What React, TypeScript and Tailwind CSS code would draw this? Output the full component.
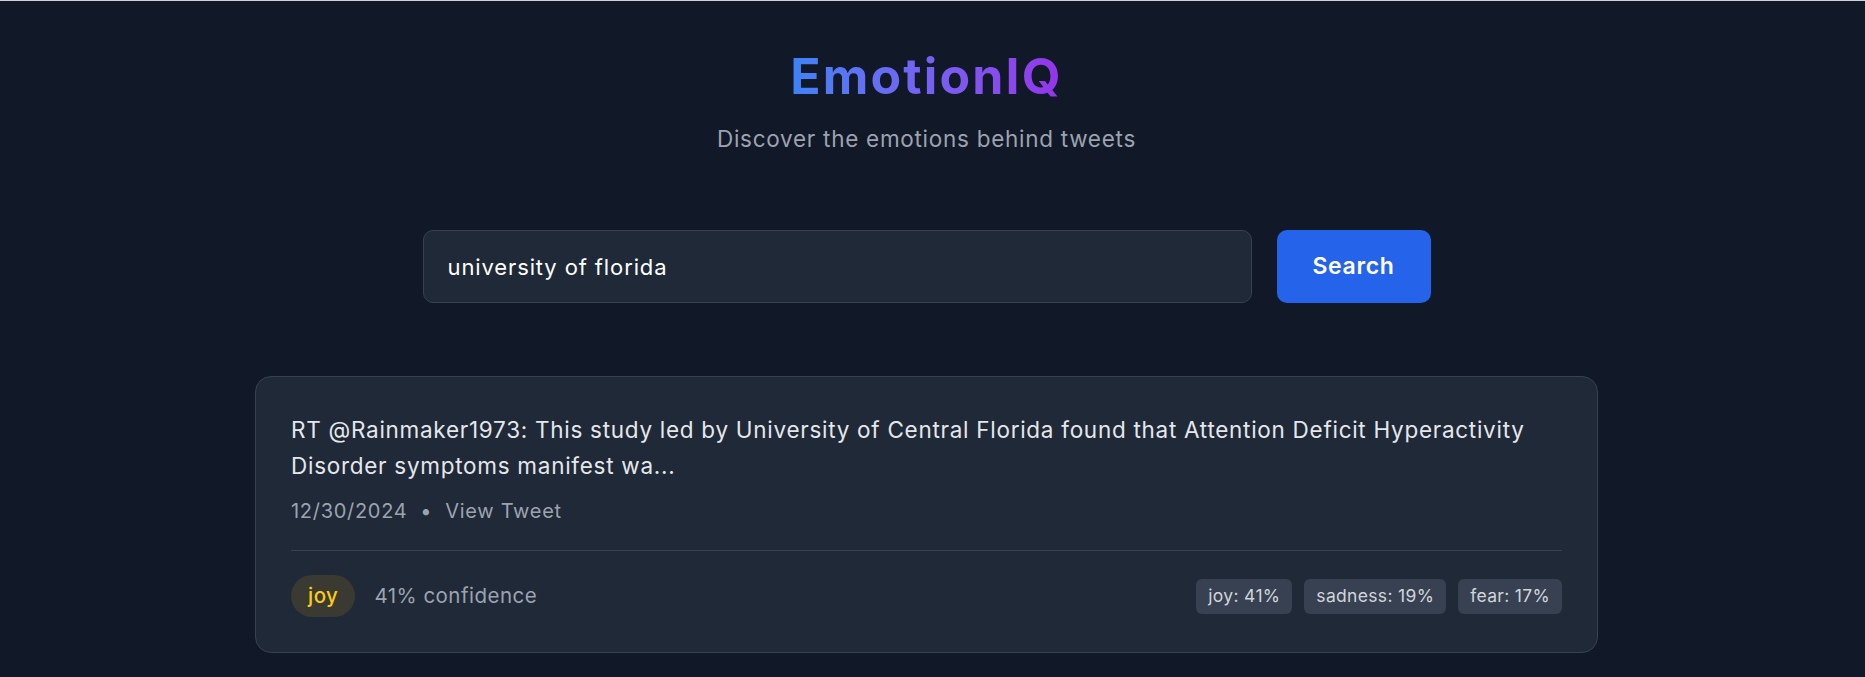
const emotions = [
  { label: "joy", value: 41 },
  { label: "sadness", value: 19 },
  { label: "fear", value: 17 },
];

export default function App() {
  return (
    <div className="min-h-screen bg-[#111827] border-t border-[#cfd3d8] pr-3 font-['Inter',sans-serif] tracking-[0.045em]">
      <header className="pt-[50px] text-center">
        <h1 className="inline-block bg-linear-to-r from-[#3b82f6] to-[#9333ea] bg-clip-text text-[50px] font-bold leading-none tracking-[0.043em] text-transparent">
          EmotionIQ
        </h1>
        <p className="mt-[23px] text-[22.5px] leading-[30px] text-[#9ca3af]">
          Discover the emotions behind tweets
        </p>
      </header>

      <div className="mx-auto mt-[76px] flex max-w-[1008px] gap-[25px]">
        <input
          className="h-[73px] flex-1 rounded-[10px] border border-[#374151] bg-[#1f2937] px-6 text-[22px] tracking-[0.04em] text-white outline-none"
          defaultValue="university of florida"
        />
        <button className="h-[73px] w-[154px] rounded-[10px] bg-[#2563eb] text-[23px] font-semibold tracking-[0.03em] text-white">
          Search
        </button>
      </div>

      <div className="mx-auto mt-[73px] max-w-[1343px] rounded-[16px] border border-[#374151] bg-[#1f2937] p-[35px]">
        <p className="text-[22.5px] leading-[36px] text-[#e5e7eb]">
          RT @Rainmaker1973: This study led by University of Central Florida found that Attention Deficit Hyperactivity
          Disorder symptoms manifest wa...
        </p>
        <div className="mt-[13px] flex items-center text-[20px] leading-[28px] tracking-[0.035em] text-[#9ca3af]">
          <span>12/30/2024</span>
          <span className="mx-[13px] text-[#9ca3af]">•</span>
          <a className="cursor-pointer hover:text-[#60a5fa]">View Tweet</a>
        </div>

        <div className="mt-[25px] flex items-center justify-between border-t border-[#374151] pt-[24px]">
          <div className="flex items-center gap-[19px] tracking-[0.03em]">
            <span className="flex h-[42px] items-center rounded-full bg-[#3a3a33] px-[17px] text-[20.5px] font-medium text-[#facc15]">
              joy
            </span>
            <span className="text-[20.5px] text-[#9ca3af]">41% confidence</span>
          </div>
          <div className="flex gap-[12px] tracking-[0.02em]">
            {emotions.map((e) => (
              <span
                key={e.label}
                className="flex h-[35px] items-center rounded-[6px] bg-[#374151] px-3 text-[17.5px] text-[#d1d5db]"
              >
                {e.label}: {e.value}%
              </span>
            ))}
          </div>
        </div>
      </div>
    </div>
  );
}
